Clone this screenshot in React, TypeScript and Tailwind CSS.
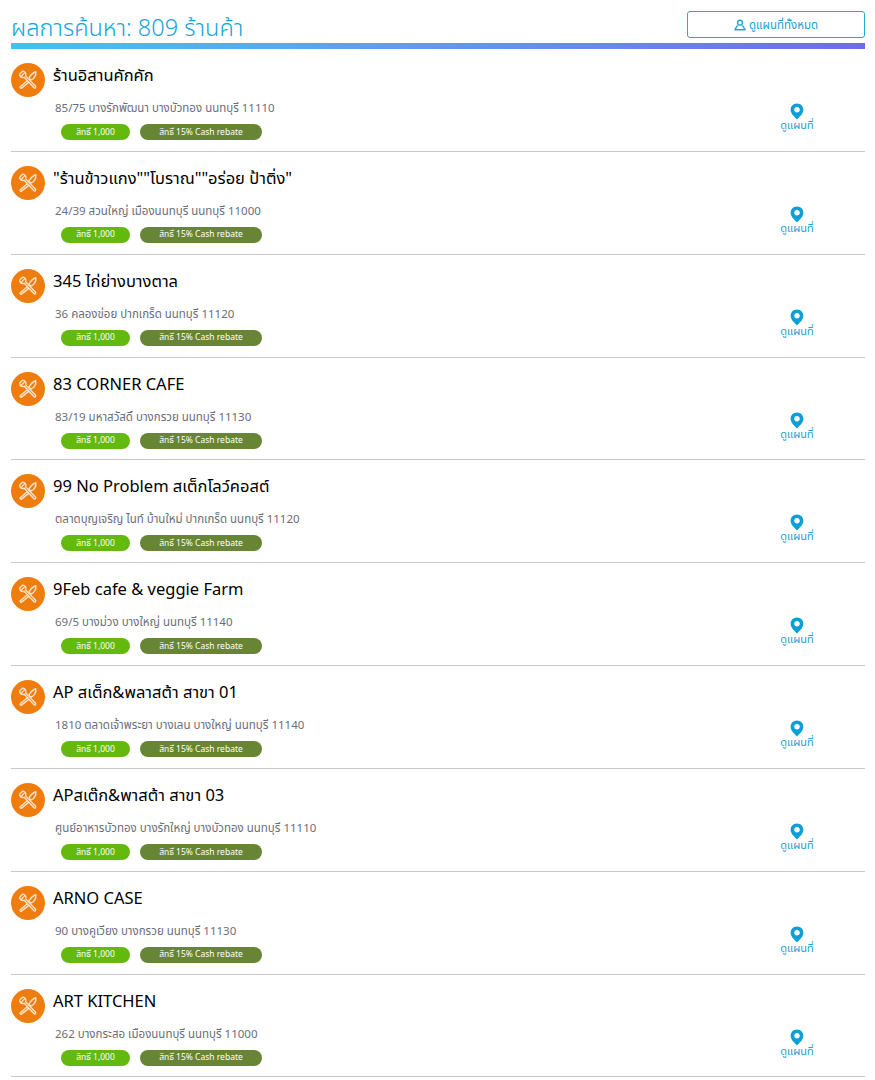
const shops = [
  { name: "ร้านอิสานคักคัก", address: "85/75 บางรักพัฒนา บางบัวทอง นนทบุรี 11110" },
  { name: "\"ร้านข้าวแกง\"\"โบราณ\"\"อร่อย ป้าติ่ง\"", address: "24/39 สวนใหญ่ เมืองนนทบุรี นนทบุรี 11000" },
  { name: "345 ไก่ย่างบางตาล", address: "36 คลองข่อย ปากเกร็ด นนทบุรี 11120" },
  { name: "83 CORNER CAFE", address: "83/19 มหาสวัสดิ์ บางกรวย นนทบุรี 11130" },
  { name: "99 No Problem สเต็กโลว์คอสต์", address: "ตลาดบุญเจริญ ไนท์ บ้านใหม่ ปากเกร็ด นนทบุรี 11120" },
  { name: "9Feb cafe & veggie Farm", address: "69/5 บางม่วง บางใหญ่ นนทบุรี 11140" },
  { name: "AP สเต็ก&พลาสต้า สาขา 01", address: "1810 ตลาดเจ้าพระยา บางเลน บางใหญ่ นนทบุรี 11140" },
  { name: "APสเต๊ก&พาสต้า สาขา 03", address: "ศูนย์อาหารบัวทอง บางรักใหญ่ บางบัวทอง นนทบุรี 11110" },
  { name: "ARNO CASE", address: "90 บางคูเวียง บางกรวย นนทบุรี 11130" },
  { name: "ART KITCHEN", address: "262 บางกระสอ เมืองนนทบุรี นนทบุรี 11000" },
];

const ForkKnife = () => (
  <svg width="22" height="22" viewBox="0 0 24 24" fill="none" stroke="#fbe3cc" strokeWidth="1.5" strokeLinecap="round" strokeLinejoin="round">
    <path d="M3 5.5 L6 2.5 M5 7.5 L8 4.5 M3 5.5 C2.6 8 5 10 8 9 L18.5 20.5 C19.6 21.4 21 20 20.2 18.8 L9.5 7.5 C10.4 5 8.6 2.2 6 2.5" />
    <path d="M20.5 3 C17.5 4 14.5 7 13 10 L15 12 C18 11 21.5 7.5 20.5 3 Z" />
    <path d="M11 13 L3.8 19 C2.8 20.2 4 21.6 5.2 20.6 L12.8 14.6" />
  </svg>
);

const Pin = () => (
  <svg width="14" height="17" viewBox="0 0 14 17">
    <path fillRule="evenodd" fill="#0c9fd8" d="M7 0.5 C3.3 0.5 0.6 3.3 0.6 6.8 C0.6 10.6 4.6 14.2 7 16.5 C9.4 14.2 13.4 10.6 13.4 6.8 C13.4 3.3 10.7 0.5 7 0.5 Z M7 4 C8.6 4 9.8 5.2 9.8 6.8 C9.8 8.4 8.6 9.6 7 9.6 C5.4 9.6 4.2 8.4 4.2 6.8 C4.2 5.2 5.4 4 7 4 Z" />
  </svg>
);

const MapUser = () => (
  <svg width="12" height="12" viewBox="0 0 13 13" fill="none" stroke="#1ea7d8" strokeWidth="1.5" strokeLinejoin="round">
    <circle cx="6.5" cy="4" r="2.6" />
    <path d="M3.8 7 L1 11.6 H12 L9.2 7" />
  </svg>
);

export default function App() {
  return (
    <div className="w-[875px] bg-white pl-[11px] pr-[10px] font-['Noto_Sans','Noto_Sans_Thai','Liberation_Sans',sans-serif]">
      <div className="flex h-[43px] items-end justify-between">
        <h1 className="text-[23.5px] leading-[32px] font-light text-[#12a5dc]">ผลการค้นหา: 809 ร้านค้า</h1>
        <button className="mb-[5px] flex h-[27px] w-[178px] items-center justify-center gap-[3px] rounded-[3px] border border-[#25a9d8] text-[11.5px] text-[#25a0cf]">
          <MapUser />
          ดูแผนที่ทั้งหมด
        </button>
      </div>
      <div className="h-[6px] bg-gradient-to-r from-[#3cc4ee] to-[#6f6be8]" />
      <div>
        {shops.map((s) => (
          <div key={s.name} className="flex h-[102.85px] border-b border-[#c9c9c9]">
            <div className="mt-[14px] flex h-[34px] w-[34px] shrink-0 items-center justify-center rounded-full bg-[#ef7d0e]">
              <ForkKnife />
            </div>
            <div className="ml-[8px] flex-1">
              <div className="mt-[14px] h-[24px] text-[16.5px] leading-[24px] text-black">{s.name}</div>
              <div className="mt-[11px] ml-[2px] h-[20px] text-[11.5px] leading-[20px] text-[#6a6e78]">{s.address}</div>
              <div className="mt-[6px] ml-[8px] flex gap-[10px] text-[8.5px] text-white">
                <span className="flex h-[16px] w-[69px] items-center justify-center rounded-full bg-[#64b90e]">สิทธิ์ 1,000</span>
                <span className="flex h-[16px] w-[122px] items-center justify-center rounded-full bg-[#678535]">สิทธิ์ 15% Cash rebate</span>
              </div>
            </div>
            <div className="mr-[43px] mt-[54px] flex w-[50px] flex-col items-center text-[11px] leading-[10px] text-[#25a0cf]">
              <Pin />
              ดูแผนที่
            </div>
          </div>
        ))}
      </div>
    </div>
  );
}
